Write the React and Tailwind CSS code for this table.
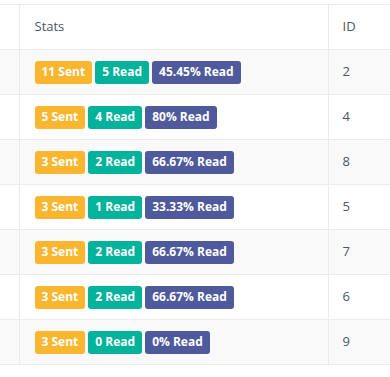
const rows = [
  { sent: 11, read: 5, pct: "45.45%", id: 2 },
  { sent: 5, read: 4, pct: "80%", id: 4 },
  { sent: 3, read: 2, pct: "66.67%", id: 8 },
  { sent: 3, read: 1, pct: "33.33%", id: 5 },
  { sent: 3, read: 2, pct: "66.67%", id: 7 },
  { sent: 3, read: 2, pct: "66.67%", id: 6 },
  { sent: 3, read: 0, pct: "0%", id: 9 },
];

const Badge = ({ className, children }) => (
  <span className={`inline-flex h-[23px] items-center rounded-[3px] px-[7px] text-[12px] font-bold text-white ${className}`}>
    {children}
  </span>
);

export default function App() {
  return (
    <div className="h-[377px] w-[390px] overflow-hidden bg-white pt-[4px] font-['Open_Sans',sans-serif] text-[#4c5667]">
      <table className="w-[410px] border-collapse text-[13px]">
        <thead>
          <tr className="h-[45px] border-y border-[#ebebeb] bg-white">
            <th className="w-[19px] border-r border-[#ebebeb]"></th>
            <th className="border-r border-[#ebebeb] pl-[15px] text-left font-normal">Stats</th>
            <th className="w-[82px] pl-[14px] text-left font-normal">ID</th>
          </tr>
        </thead>
        <tbody>
          {rows.map((r, i) => (
            <tr key={i} className={`h-[45px] border-b border-[#ebebeb] ${i % 2 === 0 ? "bg-[#f9f9f9]" : "bg-white"}`}>
              <td className="border-r border-[#ebebeb]"></td>
              <td className="border-r border-[#ebebeb] pl-[15px]">
                <div className="flex gap-[3px]">
                  <Badge className="bg-[#fbb62f]">{r.sent} Sent</Badge>
                  <Badge className="bg-[#02b29b]">{r.read} Read</Badge>
                  <Badge className="bg-[#4e5a9c]">{r.pct} Read</Badge>
                </div>
              </td>
              <td className="pl-[14px]">{r.id}</td>
            </tr>
          ))}
        </tbody>
      </table>
    </div>
  );
}
